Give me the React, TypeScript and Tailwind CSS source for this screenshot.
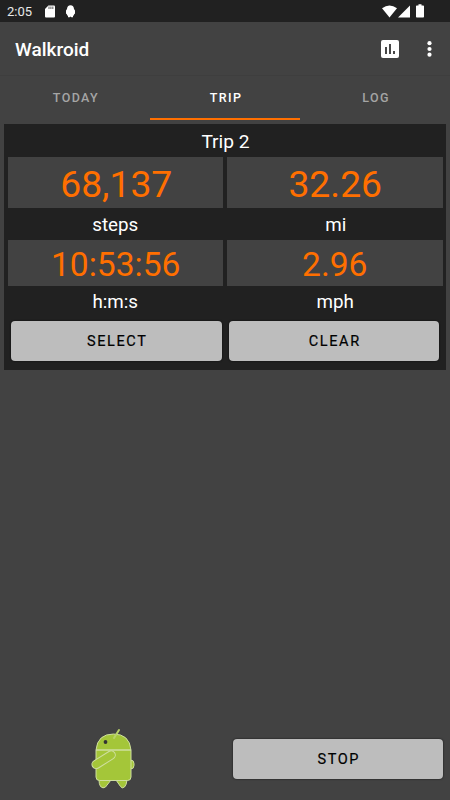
import type { ReactNode } from 'react';

const tabs = ['TODAY', 'TRIP', 'LOG'];

function StatusBar() {
  return (
    <div className="flex h-[22px] items-center bg-[#212121] pl-[7px] pr-[26px] text-white">
      <span className="w-[26px] pt-px text-[13px] leading-[22px] text-[#e8e8e8]">2:05</span>
      <svg className="ml-[12px]" width="10" height="13" viewBox="0 0 10 13">
        <path d="M3.4 0.5H9Q10 0.5 10 1.5V11.5Q10 12.5 9 12.5H1Q0 12.5 0 11.5V4Z" fill="#fff" />
        <path d="M4 1.5V4M5.9 1.5V4M7.8 1.5V4" stroke="#777" strokeWidth="1.2" />
      </svg>
      <svg className="ml-[11px]" width="9" height="13" viewBox="0 0 9 13">
        <path d="M4.5 0.3Q7.8 0.5 8 4L9 5.5V8.5L8 9.5V10.5H7V12.3H5.3L4.5 11.6L3.7 12.3H2V10.5H1V9.5L0 8.5V5.5L1 4Q1.2 0.5 4.5 0.3Z" fill="#fff" />
      </svg>
      <div className="ml-auto flex items-center">
        <svg width="15" height="13" viewBox="0 0 15 13">
          <path d="M0 3.2Q7.5 -2.4 15 3.2L7.5 12.4Z" fill="#fff" />
        </svg>
        <svg className="ml-[1px]" width="12" height="13" viewBox="0 0 12 13">
          <path d="M12 0.5V12.5H0Z" fill="#fff" />
        </svg>
        <svg className="ml-[6px]" width="8" height="14" viewBox="0 0 8 14">
          <path d="M2.5 0.3H5.5V1.5H7.2Q8 1.5 8 2.3V12.7Q8 13.5 7.2 13.5H0.8Q0 13.5 0 12.7V2.3Q0 1.5 0.8 1.5H2.5Z" fill="#fff" />
        </svg>
      </div>
    </div>
  );
}

function AppBar() {
  return (
    <header className="flex h-[54px] items-center border-b border-[#3e3e3e] pl-[15px] pr-[18px]">
      <h1 className="pt-[3px] text-[19px] font-medium text-white">Walkroid</h1>
      <button className="ml-auto" aria-label="Chart">
        <svg width="18" height="18" viewBox="0 0 18 18">
          <rect width="18" height="18" rx="2" fill="#fff" />
          <path d="M5 7V14M9 4V14M13 11V14" stroke="#333" strokeWidth="1.8" />
        </svg>
      </button>
      <button className="ml-[28px]" aria-label="More">
        <svg width="5" height="18" viewBox="0 0 5 18">
          <circle cx="2.5" cy="3.2" r="2.1" fill="#fff" />
          <circle cx="2.5" cy="9" r="2.1" fill="#fff" />
          <circle cx="2.5" cy="14.7" r="2.1" fill="#fff" />
        </svg>
      </button>
    </header>
  );
}

function Value({ className, children }: { className: string; children: ReactNode }) {
  return (
    <div className={`flex items-center justify-center bg-[#424242] text-[#ff6f00] ${className}`}>
      {children}
    </div>
  );
}

function Button({ children }: { children: ReactNode }) {
  return (
    <button className="h-[39.5px] w-[210.5px] rounded-[4px] bg-[#bdbdbd] pl-[2px] pt-[2px] text-[14.5px] tracking-[1.6px] text-black shadow-[0_0_2px_rgba(0,0,0,0.8)] [-webkit-text-stroke:0.2px]">
      {children}
    </button>
  );
}

function Walker() {
  return (
    <svg width="44" height="62" viewBox="0 0 44 62" fill="#a4c639" stroke="#cfdfa0" strokeWidth="1">
      <path d="M8 52H20L14.5 59Q12 61 9.500 58.500Q8 56 8 52Z" />
      <path d="M25 52H36Q35.500 57 33.500 59Q31 61 29.500 58.500Z" />
      <rect x="36" y="32" width="7" height="9" rx="3.5" />
      <path d="M5 22Q6.500 6 22.500 6Q38.500 6 40 22V49Q40 52.500 36.500 52.500H8.500Q5 52.500 5 49Z" />
      <path d="M5 22H40" strokeWidth="1.500" />
      <path d="M23 10L28 2" stroke="#b9d26a" strokeWidth="2" strokeLinecap="round" />
      <circle cx="14.500" cy="14" r="1.900" fill="#333" stroke="none" />
      <rect x="-4" y="-4.200" width="26" height="8.400" rx="4.200" transform="translate(5 36.500) rotate(-32)" />
    </svg>
  );
}

export default function App() {
  return (
    <div className="flex h-[800px] w-[450px] flex-col overflow-hidden bg-[#424242] font-['Roboto',sans-serif]">
      <StatusBar />
      <AppBar />
      <nav className="flex h-[44px]">
        {tabs.map((tab) => (
          <button
            key={tab}
            className={`flex w-[150px] items-center justify-center border-b-2 pl-[2px] pt-[2px] text-[12.5px] font-medium tracking-[1.4px] ${
              tab === 'TRIP' ? 'border-[#ff6f00] text-white' : 'border-transparent text-[#a5a5a5]'
            }`}
          >
            {tab}
          </button>
        ))}
      </nav>

      <main className="mx-[4px] mt-[4px] h-[246px] bg-[#212121] px-[3.5px] text-white">
        <h2 className="h-[33px] pl-[1px] text-center text-[19.2px] leading-[35px]">Trip 2</h2>
        <div className="grid grid-cols-2 gap-x-[4px] text-center text-[18.8px]">
          <Value className="h-[51px] pl-[2px] pt-[5px] text-[37.3px]">68,137</Value>
          <Value className="h-[51px] pl-[1px] pt-[5px] text-[37.3px]">32.26</Value>
          <div className="h-[32px] leading-[34px]">steps</div>
          <div className="h-[32px] pl-[2px] leading-[34px]">mi</div>
          <Value className="h-[46px] pl-[1px] pt-[5px] text-[33.6px]">10:53:56</Value>
          <Value className="h-[46px] pt-[5px] text-[33.6px]">2.96</Value>
          <div className="h-[35px] leading-[32px]">h:m:s</div>
          <div className="h-[35px] pl-[1px] leading-[32px]">mph</div>
        </div>
        <div className="flex justify-between px-[3.5px]">
          <Button>SELECT</Button>
          <Button>CLEAR</Button>
        </div>
      </main>

      <footer className="mt-auto flex h-[72px] items-start justify-between pl-[91px] pr-[7px]">
        <Walker />
        <div className="pt-[11px]">
          <Button>STOP</Button>
        </div>
      </footer>
    </div>
  );
}
